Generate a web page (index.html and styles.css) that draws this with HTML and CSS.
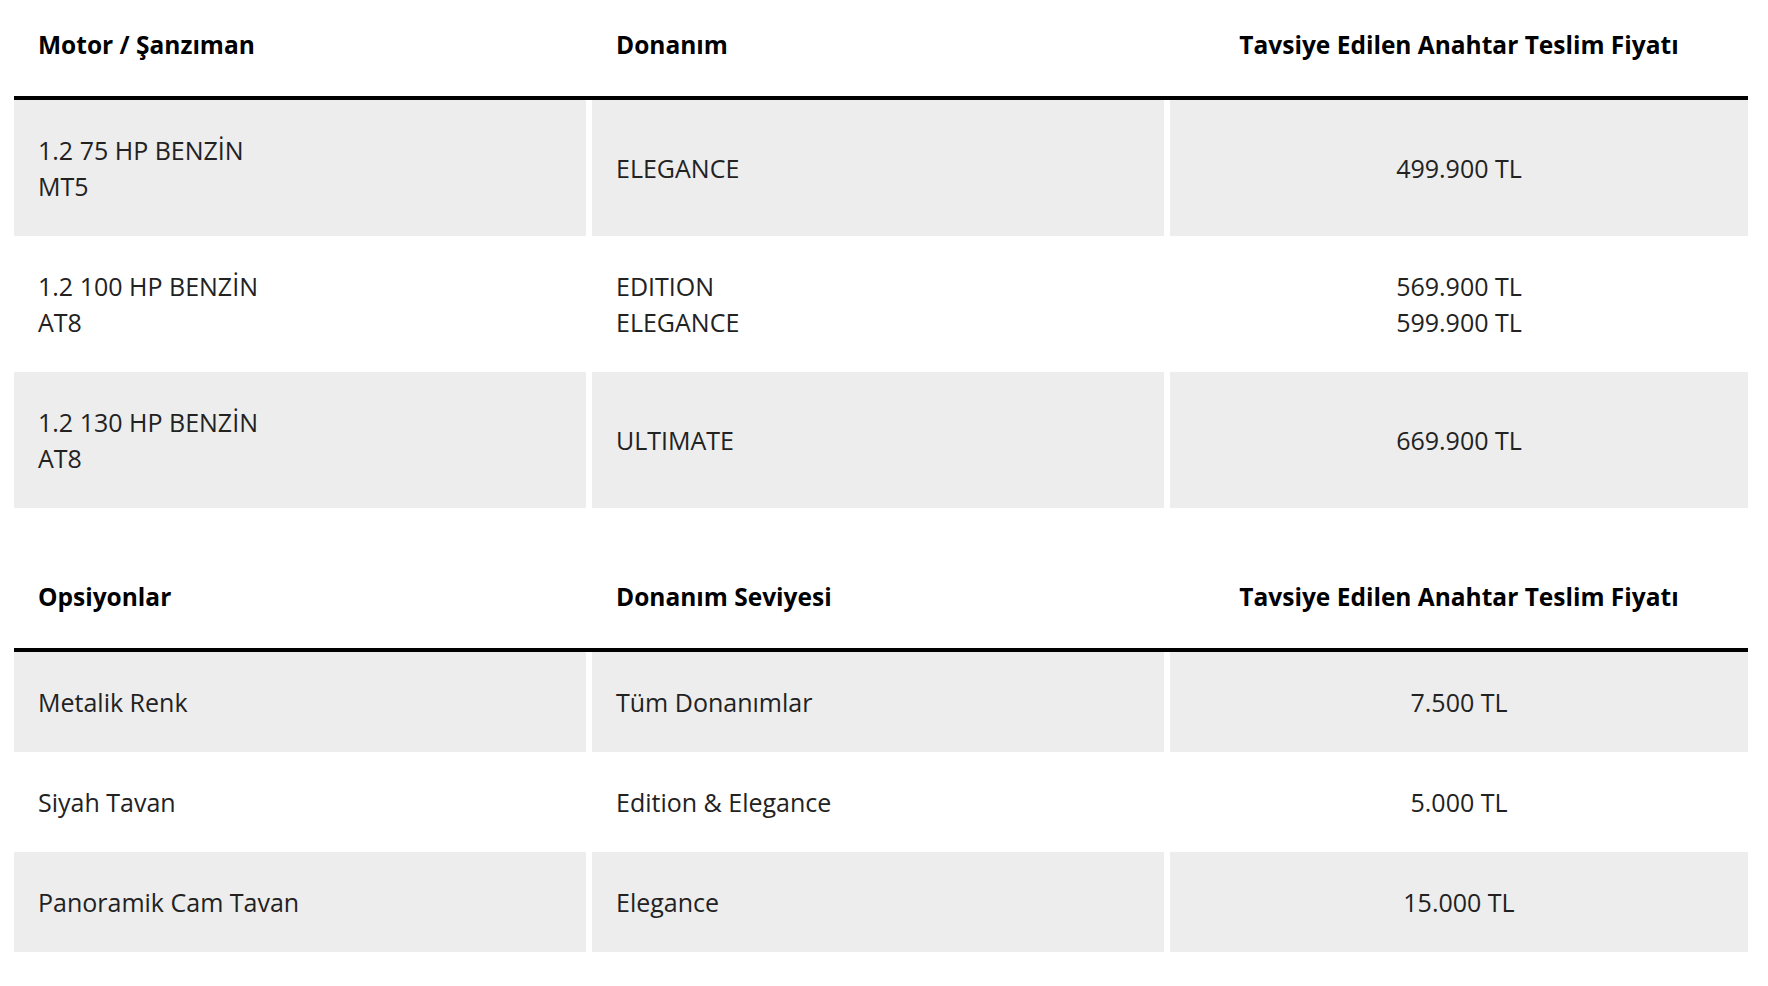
FILE: index.html
```html
<!DOCTYPE html>
<html lang="tr">
<head>
<meta charset="utf-8">
<link rel="stylesheet" href="styles.css">
</head>
<body>
<div class="page">
  <section class="table">
    <div class="row head">
      <div class="cell">Motor / Şanzıman</div>
      <div class="cell">Donanım</div>
      <div class="cell center">Tavsiye Edilen Anahtar Teslim Fiyatı</div>
    </div>
    <div class="row tall shade">
      <div class="cell">1.2 75 HP BENZİN<br>MT5</div>
      <div class="cell">ELEGANCE</div>
      <div class="cell center">499.900 TL</div>
    </div>
    <div class="row tall">
      <div class="cell">1.2 100 HP BENZİN<br>AT8</div>
      <div class="cell">EDITION<br>ELEGANCE</div>
      <div class="cell center">569.900 TL<br>599.900 TL</div>
    </div>
    <div class="row tall shade">
      <div class="cell">1.2 130 HP BENZİN<br>AT8</div>
      <div class="cell">ULTIMATE</div>
      <div class="cell center">669.900 TL</div>
    </div>
  </section>

  <section class="table second">
    <div class="row head">
      <div class="cell">Opsiyonlar</div>
      <div class="cell">Donanım Seviyesi</div>
      <div class="cell center">Tavsiye Edilen Anahtar Teslim Fiyatı</div>
    </div>
    <div class="row shade">
      <div class="cell">Metalik Renk</div>
      <div class="cell">Tüm Donanımlar</div>
      <div class="cell center">7.500 TL</div>
    </div>
    <div class="row">
      <div class="cell">Siyah Tavan</div>
      <div class="cell">Edition &amp; Elegance</div>
      <div class="cell center">5.000 TL</div>
    </div>
    <div class="row shade">
      <div class="cell">Panoramik Cam Tavan</div>
      <div class="cell">Elegance</div>
      <div class="cell center">15.000 TL</div>
    </div>
  </section>
</div>
</body>
</html>
```

FILE: styles.css
```css
* { box-sizing: border-box; }
html, body {
  margin: 0;
  padding: 0;
  background: #ffffff;
}
body {
  font-family: "Open Sans", "Noto Sans", sans-serif;
  color: #222222;
  font-size: 25px;
  line-height: 36px;
}
.page {
  padding: 0 20px 0 14px;
}
.table.second {
  margin-top: 44px;
}
.row {
  display: grid;
  grid-template-columns: 572px 572px 1fr;
  column-gap: 6px;
}
.row.head {
  height: 100px;
  border-bottom: 4px solid #000000;
  color: #000000;
  font-weight: 700;
  font-size: 24.5px;
  align-items: center;
}
.row.head .cell {
  display: block;
  padding: 0 24px 6px;
}
.cell {
  padding: 32px 24px;
  display: flex;
  flex-direction: column;
  justify-content: center;
}
.cell.center {
  text-align: center;
  align-items: center;
}
.row.shade .cell {
  background: #ededed;
}
```
